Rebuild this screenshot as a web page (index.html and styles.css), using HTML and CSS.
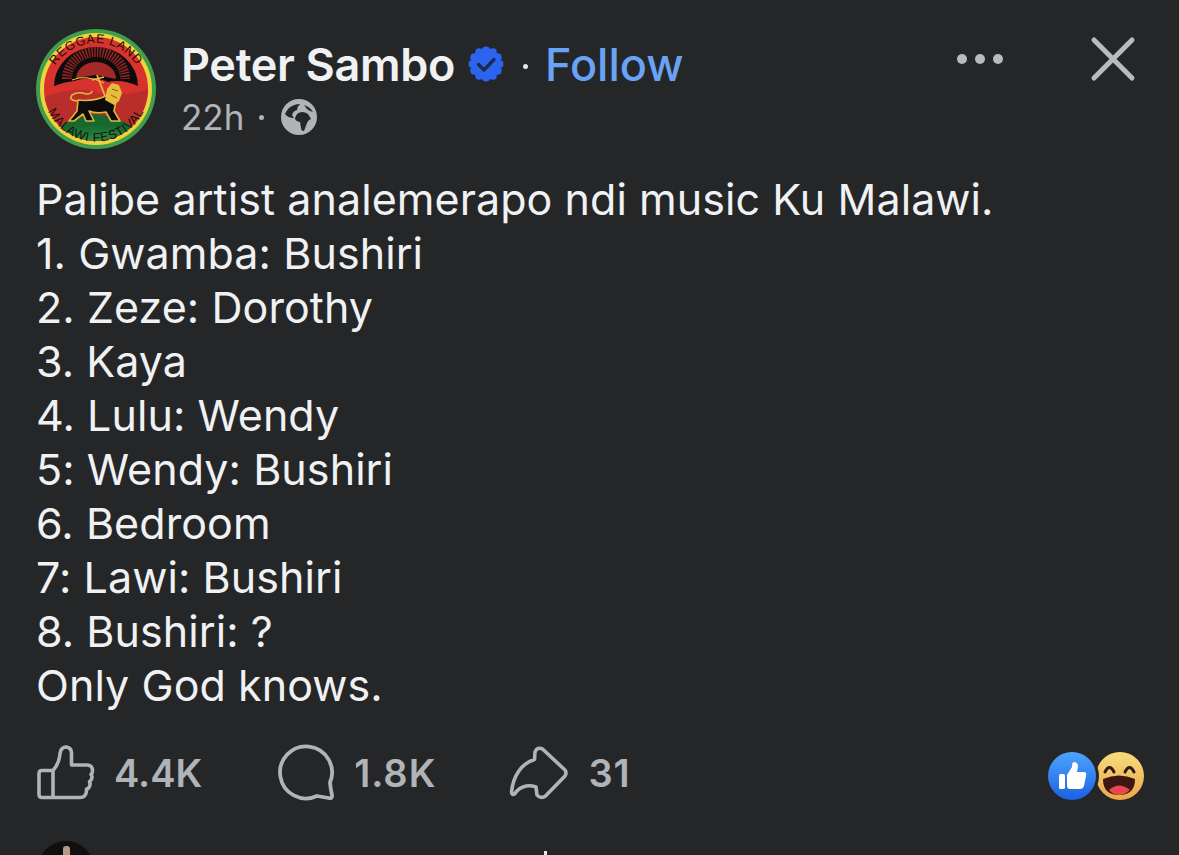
FILE: index.html
```html
<!DOCTYPE html>
<html lang="en">
<head>
<meta charset="utf-8">
<title>Peter Sambo</title>
<link rel="stylesheet" href="styles.css">
</head>
<body>
<main class="post">
  <header class="head">
    <svg class="avatar" viewBox="0 0 120 120">
      <defs>
        <clipPath id="inner"><circle cx="60" cy="60" r="52"/></clipPath>
        <radialGradient id="fieldg" cx="50%" cy="100%" r="70%"><stop offset="0" stop-color="#2f9e4f"/><stop offset="1" stop-color="#17682f"/></radialGradient>
        <path id="arcTop" d="M12 62A48 48 0 0 1 108 62"/>
        <path id="arcBot" d="M9 74A53 53 0 0 0 111 74"/>
      </defs>
      <circle cx="60" cy="60" r="60" fill="#3f9f4c"/>
      <circle cx="60" cy="60" r="56" fill="#f0d23c"/>
      <circle cx="60" cy="60" r="52" fill="#d8322f"/>
      <g clip-path="url(#inner)">
        <path d="M8 68Q40 56 60 63T112 60V120H8Z" fill="#b92e2b"/>
        <path d="M18 57A42 39 0 0 1 102 57Q86 50 72 53Q56 46 38 52Q28 53 18 57Z" fill="#0d0b0b"/>
        <path d="M31 50A29 27 0 0 1 89 50" fill="none" stroke="#8f2323" stroke-width="10" stroke-dasharray="1.600 1.200"/>
        <path d="M40 50A20 17 0 0 1 80 50Q70 48 60 46Q50 47 40 50Z" fill="#a52a27"/>
        <path d="M12 108Q30 88 60 85Q90 88 108 108V120H12Z" fill="url(#fieldg)"/>
      </g>
      <path d="M36 51Q50 45 68 54" fill="none" stroke="#e9c93c" stroke-width="1"/>
      <path d="M61 46L69 67M56 51L68 48" stroke="#e6b73c" stroke-width="1.800" fill="none"/>
      <path d="M42 71Q58 73 72 66L80 72L78 82L84 92H75L70 83Q60 85 53 82L58 92H50L47 85L38 92H33L41 82Z" fill="#0d0b0b" stroke="#e2b637" stroke-width="1.600" stroke-linejoin="round"/>
      <path d="M69 71L71 60L76 54L83 56L86 64L83 72L78 76Z" fill="#e8bb3b"/>
      <path d="M76 60L82 62M75 66L81 69" stroke="#8a5a16" stroke-width="1"/>
      <path d="M41 72Q32 71 36 66Q42 62 50 65Q56 65 56 62" fill="none" stroke="#e2b637" stroke-width="1.600"/>
      <text class="logo-text"><textPath href="#arcTop" startOffset="50%" text-anchor="middle">REGGAE LAND</textPath></text>
      <text class="logo-text"><textPath href="#arcBot" startOffset="50%" text-anchor="middle">MALAWI FESTIVAL</textPath></text>
    </svg>
    <div class="who">
      <div class="name-row">
        <span class="name">Peter Sambo</span>
        <svg class="badge" viewBox="0 0 36 36">
          <g fill="#2c64f0">
            <circle cx="18" cy="18" r="15"/>
            <circle cx="18" cy="4.500" r="4"/><circle cx="24.800" cy="6.300" r="4"/><circle cx="29.700" cy="11.200" r="4"/><circle cx="31.500" cy="18" r="4"/><circle cx="29.700" cy="24.800" r="4"/><circle cx="24.800" cy="29.700" r="4"/><circle cx="18" cy="31.500" r="4"/><circle cx="11.200" cy="29.700" r="4"/><circle cx="6.300" cy="24.800" r="4"/><circle cx="4.500" cy="18" r="4"/><circle cx="6.300" cy="11.200" r="4"/><circle cx="11.200" cy="6.300" r="4"/>
          </g>
          <path d="M10.500 18.500L16 24L26 13.500" fill="none" stroke="#1d2a4d" stroke-width="3.400" stroke-linecap="round" stroke-linejoin="round"/>
        </svg>
        <span class="sep"></span>
        <span class="follow">Follow</span>
      </div>
      <div class="meta">
        <span>22h</span>
        <span class="meta-dot"></span>
        <svg class="globe" viewBox="0 0 36 36">
          <circle cx="18" cy="18" r="18" fill="#b0b3b8"/>
          <path d="M8 9Q13 5 19 5Q16 8 16 11Q12 12 11 16L13 19Q7 19 4 15Q5 12 8 9Z" fill="#252628"/>
          <path d="M16 15Q21 11 27 15L30 20Q27 21 26 24L23 32Q20 32 20 29L19 23Q14 22 14 19Z" fill="#252628"/>
          <path d="M23 6Q29 8 32 13Q28 12 26 10Z" fill="#252628"/>
        </svg>
      </div>
    </div>
    <div class="controls">
      <div class="dots"><i></i><i></i><i></i></div>
      <svg class="close" viewBox="0 0 46 46"><path d="M4 4L42 42M42 4L4 42" stroke="#b9bbc0" stroke-width="5" stroke-linecap="round"/></svg>
    </div>
  </header>

  <div class="body-text">
    <p>Palibe artist analemerapo ndi music Ku Malawi.</p>
    <p>1. Gwamba: Bushiri</p>
    <p>2. Zeze: Dorothy</p>
    <p>3. Kaya</p>
    <p>4. Lulu: Wendy</p>
    <p>5: Wendy: Bushiri</p>
    <p>6. Bedroom</p>
    <p>7: Lawi: Bushiri</p>
    <p>8. Bushiri: ?</p>
    <p>Only God knows.</p>
  </div>

  <footer class="actions">
    <div class="action act-like">
      <svg class="ico-like" viewBox="0 0 60 58"><path d="M17 27.500V54.500H6Q3 54.500 3 51.500V30.500Q3 27.500 6 27.500H17Q22 22 23.500 14Q24 9 25 7Q27 3.800 30.500 4Q35.500 5 35.500 10V22H51Q56.500 22 56.500 28Q56.500 30 55 31.500Q57 34 55 37Q54 38.500 53.500 38.500Q55 42 52.500 45Q51.500 46 50.500 46Q51 50 48.500 53Q47 54.500 44 54.500H17" fill="none" stroke="#b0b3b8" stroke-width="3.600" stroke-linejoin="round"/></svg>
      <span class="count">4.4K</span>
    </div>
    <div class="action act-comment">
      <svg class="ico-comment" viewBox="0 0 60 58"><path d="M41 53A26 26 0 1 1 54 39.500Q54.500 46 56 52Q56.500 56 52.500 55Q47 54 41 53Z" fill="none" stroke="#b0b3b8" stroke-width="3.800" stroke-linejoin="round"/></svg>
      <span class="count">1.8K</span>
    </div>
    <div class="action act-share">
      <svg class="ico-share" viewBox="0 0 60 58"><path d="M2.500 49C4 33 13 20 25.500 16.500L26 9Q28 3.500 33.500 6L56 27Q58 30 56 33L36 53.500Q31 56 28 52L27 44C18 41 10 44 6 50.500Q3 53 2.500 49Z" fill="none" stroke="#b0b3b8" stroke-width="3.600" stroke-linejoin="round"/></svg>
      <span class="count">31</span>
    </div>
    <div class="reactions">
      <svg class="r-like" viewBox="0 0 48 48">
        <defs><linearGradient id="lk" x1="0" y1="0" x2="0" y2="1"><stop offset="0" stop-color="#4ea4fa"/><stop offset="1" stop-color="#1c60e3"/></linearGradient></defs>
        <circle cx="24" cy="24" r="24" fill="url(#lk)"/>
        <rect x="11" y="22" width="6" height="15" rx="1.500" fill="#fff"/>
        <path d="M19 23L24 15Q24 10 26 10Q30 10 30 15L29 20H36Q39 20 38 24L36 34Q35 37 32 37H22Q19 37 19 34Z" fill="#fff"/>
      </svg>
      <svg class="r-haha" viewBox="0 0 48 48">
        <defs><linearGradient id="hh" x1="0" y1="0" x2="0" y2="1"><stop offset="0" stop-color="#f8dc7c"/><stop offset="1" stop-color="#eda748"/></linearGradient></defs>
        <circle cx="24" cy="24" r="24" fill="url(#hh)"/>
        <circle cx="-24" cy="24" r="27" fill="#252628"/>
        <path d="M9 20Q13.500 11 18 20M29 20Q33.500 11 38 20" fill="none" stroke="#2c1b17" stroke-width="3" stroke-linecap="round"/>
        <path d="M7 27Q23 20 39 27Q39 43 23 43Q7 43 7 27Z" fill="#3d1714"/>
        <path d="M13 38Q23 29 34 38Q29 43 23 43Q17 43 13 38Z" fill="#e8484d"/>
      </svg>
    </div>
  </footer>

  <div class="next">
    <div class="next-avatar"><i></i></div>
    <div class="next-mark"></div>
  </div>
</main>
</body>
</html>
```
FILE: styles.css
```css
* { box-sizing: border-box; }
html, body { margin: 0; height: 100%; overflow: hidden; }
body { background: #252628; font-family: Inter, "Liberation Sans", sans-serif; color: #f0f1f3; }
.post { height: 855px; padding: 29px 36px 0; display: flex; flex-direction: column; overflow: hidden; }

.head { display: flex; align-items: flex-start; height: 120px; }
.avatar { width: 120px; height: 120px; flex: none; }
.logo-text { font-family: "Liberation Sans", sans-serif; font-size: 12.500px; fill: #1a0f0c; letter-spacing: .6px; }
.who { margin-left: 25px; display: flex; flex-direction: column; flex: 1; }
.name-row { display: flex; align-items: center; height: 70px; }
.name { font-size: 45px; font-weight: 600; letter-spacing: -.33px; }
.badge { width: 36px; height: 36px; margin-left: 13px; flex: none; }
.sep { width: 5px; height: 5px; border-radius: 50%; background: #e4e6eb; margin-left: 19px; margin-top: 4px; }
.follow { font-size: 45px; font-weight: 500; color: #6aa3f5; margin-left: 17px; }
.meta { display: flex; align-items: center; height: 34px; margin-top: 1px; color: #b0b3b8; font-size: 35px; }
.meta-dot { width: 5px; height: 5px; border-radius: 50%; background: #b0b3b8; margin-left: 15px; }
.globe { width: 36px; height: 36px; margin-left: 17px; }
.controls { display: flex; align-items: flex-start; flex: none; margin-right: 7px; }
.dots { display: flex; gap: 8px; margin-top: 25px; }
.dots i { width: 10px; height: 10px; border-radius: 50%; background: #b9bbc0; }
.close { width: 46px; height: 46px; margin-left: 87px; margin-top: 7px; }

.body-text { margin-top: 23px; font-size: 43px; line-height: 54px; letter-spacing: .07px; }
.body-text p { margin: 0; }

.actions { display: flex; align-items: center; margin-top: 31px; height: 58px; }
.action { display: flex; align-items: center; }
.action svg { width: 60px; height: 58px; flex: none; }
.count { font-size: 38px; font-weight: 600; color: #b0b3b8; margin-top: 2px; }
.act-like .count { margin-left: 18px; }
.act-comment { margin-left: 74px; }
.act-comment .count { margin-left: 18px; letter-spacing: 1px; }
.act-share { margin-left: 73px; }
.act-share .count { margin-left: 19px; letter-spacing: 1px; }
.reactions { margin-left: auto; margin-right: -1px; margin-top: 8px; display: flex; align-items: center; }
.reactions svg { width: 48px; height: 48px; flex: none; }
.r-haha { margin-left: 0; }

.next { display: flex; align-items: flex-start; margin-top: 40px; }
.next-avatar { width: 56px; height: 56px; border-radius: 50%; background: #0f0f10; margin-left: 2px; overflow: hidden; }
.next-avatar i { display: block; width: 7px; height: 20px; background: #b89a82; border-radius: 3px; margin: 5px auto 0; }
.next-mark { width: 3px; height: 6px; background: #e4e6eb; margin-left: 450px; margin-top: 10px; }
```
